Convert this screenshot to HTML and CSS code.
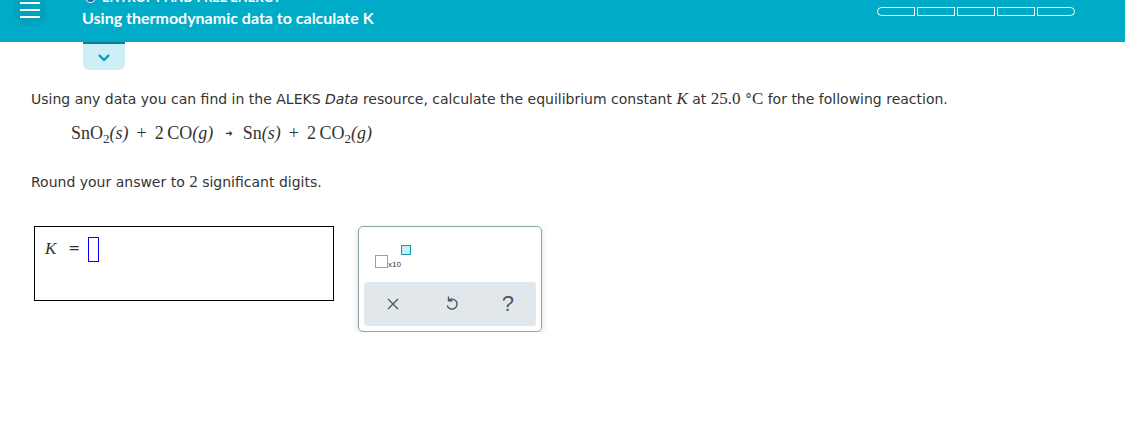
FILE: index.html
```html
<!DOCTYPE html>
<html lang="en">

<head>
  <meta charset="UTF-8">
  <title>Using thermodynamic data to calculate K</title>
  <link rel="stylesheet" href="styles.css">
</head>

<body>

  <header class="topbar">
    <div class="menu-btn">
      <span></span><span></span><span></span>
    </div>
    <div class="topic">
      <div class="topic-name"><i class="topic-dot"></i>ENTROPY AND FREE ENERGY</div>
      <div class="topic-title">Using thermodynamic data to calculate K</div>
    </div>
    <div class="progress">
      <span></span><span></span><span></span><span></span><span></span>
    </div>
  </header>

  <div class="drop-tab">
    <svg width="14" height="9" viewBox="0 0 14 9"><path d="M2 2 L7 7 L12 2" fill="none" stroke="#0a9dba" stroke-width="2.4"/></svg>
  </div>

  <main class="question">
    <p class="prompt">Using any data you can find in the ALEKS <em>Data</em> resource, calculate the equilibrium constant <span class="math it">K</span> at <span class="math">25.0</span> °<span class="math">C</span> for the following reaction.</p>

    <p class="reaction">SnO<sub>2</sub><i>(s)</i><span class="op">+</span>2&#8201;CO<i>(g)</i><span class="arrow">&#10140;</span>Sn<i>(s)</i><span class="op">+</span>2&#8201;CO<sub>2</sub><i>(g)</i></p>

    <p class="prompt">Round your answer to <span class="math">2</span> significant digits.</p>

    <div class="answer-row">
      <div class="answer-box">
        <span class="math it">K</span>
        <span class="eq">=</span>
        <span class="blank"></span>
      </div>

      <div class="tools">
        <div class="sci">
          <span class="sci-box"></span><span class="sci-x">x10</span><span class="sci-exp"></span>
        </div>
        <div class="tool-actions">
          <svg width="14" height="14" viewBox="0 0 14 14"><path d="M2 2 L12 12 M12 2 L2 12" stroke="#4a5a62" stroke-width="1.4"/></svg>
          <svg width="14" height="18" viewBox="0 0 14 18"><path d="M4.5 5.5 A5 5 0 1 1 3.2 10.5" fill="none" stroke="#4a5a62" stroke-width="1.4"/><path d="M4.5 1.5 L4.5 5.8 L8.5 5.8" fill="none" stroke="#4a5a62" stroke-width="1.4"/></svg>
          <span class="help">?</span>
        </div>
      </div>
    </div>
  </main>

</body>

</html>
```

FILE: styles.css
```css
body {
  margin: 0;
  font-family: 'DejaVu Sans', Verdana, sans-serif;
  color: #333;
  background: #fff;
}

.topbar {
  height: 42px;
  background-color: #00abc7;
  display: flex;
  align-items: flex-start;
  overflow: hidden;
}

.menu-btn {
  width: 34px;
  height: 34px;
  margin: -7px 0 0 13px;
  border-radius: 50%;
  background-color: #00a2bd;
  display: flex;
  flex-direction: column;
  justify-content: center;
  align-items: center;
  gap: 5px;
}

.menu-btn span {
  display: block;
  width: 20px;
  height: 2px;
  background: #fff;
}

.topic {
  margin-left: 35px;
  font-family: Lato, sans-serif;
  color: white;
}

.topic-name {
  margin-top: -9px;
  font-size: 13px;
  font-weight: 700;
  height: 12px;
  display: flex;
  align-items: center;
  gap: 6px;
}

.topic-dot {
  display: inline-block;
  width: 9px;
  height: 9px;
  border: 1px solid #fff;
  border-radius: 50%;
  background: #1565c0;
  margin-left: 3px;
}

.topic-title {
  margin-top: 5px;
  font-size: 16px;
  font-weight: 700;
}

.progress {
  margin: 7px 50px 0 auto;
  display: flex;
  gap: 2px;
}

.progress span {
  width: 36px;
  height: 7px;
  border: 1.5px solid #fff;
}

.progress span:first-child {
  border-radius: 5px 0 0 5px;
}

.progress span:last-child {
  border-radius: 0 5px 5px 0;
}

.drop-tab {
  width: 42px;
  height: 26px;
  margin-left: 83px;
  background-color: #cdeef4;
  border-top: 2px solid #0b7f92;
  border-radius: 0 0 6px 6px;
  display: flex;
  justify-content: center;
  align-items: center;
}

.question {
  padding: 17px 0 0 31px;
  font-size: 14px;
}

.question p {
  margin: 0;
}

.prompt {
  line-height: 24px;
}

.math {
  font-family: 'Liberation Serif', serif;
  font-size: 17px;
}

.it {
  font-style: italic;
}

.reaction {
  padding: 12px 0 0 40px;
  height: 42px;
  box-sizing: border-box;
  font-family: 'Liberation Serif', serif;
  font-size: 18px;
  margin-bottom: 17px !important;
}

.reaction sub {
  font-size: 13px;
  vertical-align: -4px;
}

.op {
  margin: 0 8px;
}

.arrow {
  display: inline-block;
  font-family: 'DejaVu Sans', sans-serif;
  font-size: 9px;
  vertical-align: 3px;
  margin: 0 10px 0 12px;
}

.answer-row {
  margin-top: 32px;
  display: flex;
  align-items: flex-start;
  gap: 24px;
}

.answer-box {
  margin-left: 3px;
  width: 300px;
  height: 75px;
  border: 1px solid #000;
  display: flex;
  align-items: flex-start;
  padding: 10px 0 0 10px;
  box-sizing: border-box;
}

.answer-box .math {
  margin-top: 2px;
}

.eq {
  margin: 3px 8px 0 12px;
  font-size: 14px;
}

.blank {
  width: 9px;
  height: 23px;
  border: 1px solid #0000ff;
}

.tools {
  width: 184px;
  height: 106px;
  border: 1px solid #8fa3ab;
  border-radius: 5px;
  box-shadow: 0 2px 6px rgba(0, 0, 0, 0.15);
  box-sizing: border-box;
  padding: 5px;
  display: flex;
  flex-direction: column;
  justify-content: space-between;
}

.sci {
  display: flex;
  align-items: flex-end;
  margin: 16px 0 0 11px;
  height: 20px;
}

.sci-box {
  width: 11px;
  height: 11px;
  border: 1.5px solid #8fa3ab;
}

.sci-x {
  font-family: 'Liberation Sans', sans-serif;
  font-size: 8px;
  margin-bottom: -1px;
}

.sci-exp {
  width: 8px;
  height: 8px;
  border: 1.5px solid #0a9dba;
  background: #c9eef4;
  align-self: flex-start;
  margin-top: -3px;
}

.tool-actions {
  height: 44px;
  background-color: #e1e7ea;
  border-radius: 3px;
  display: flex;
  align-items: center;
  justify-content: space-around;
}

.help {
  font-family: 'Liberation Sans', sans-serif;
  font-size: 22px;
  color: #4a5a62;
}
```
